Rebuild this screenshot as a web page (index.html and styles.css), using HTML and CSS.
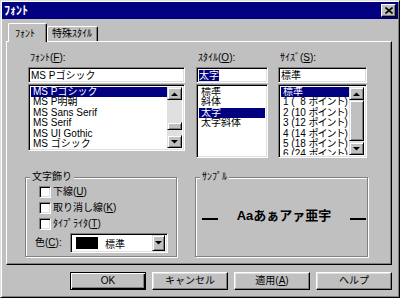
FILE: index.html
```html
<!DOCTYPE html>
<html lang="ja">
<head>
<meta charset="utf-8">
<title>ﾌｫﾝﾄ</title>
<link rel="stylesheet" href="styles.css">
</head>
<body>
<div class="win">
  <div class="title">
    <span class="title-text">ﾌｫﾝﾄ</span>
    <div class="close"><svg width="8" height="7" viewBox="0 0 8 7"><path d="M0.5 0.5L7.5 6.5M7.5 0.5L0.5 6.5" stroke="#000" stroke-width="1.6"/></svg></div>
  </div>
  <div class="tabs">
    <div class="tab active">ﾌｫﾝﾄ</div>
    <div class="tab">特殊ｽﾀｲﾙ</div>
  </div>
  <div class="panel">
    <div class="top">
      <div class="col col-font">
        <div class="lbl">ﾌｫﾝﾄ(<u>F</u>):</div>
        <div class="edit">MS Pゴシック</div>
        <div class="list list-font">
          <div class="items">
            <div class="item sel">MS Pゴシック</div>
            <div class="item">MS P明朝</div>
            <div class="item">MS Sans Serif</div>
            <div class="item">MS Serif</div>
            <div class="item">MS UI Gothic</div>
            <div class="item">MS ゴシック</div>
          </div>
          <div class="sb">
            <div class="sbtn"><svg width="7" height="4" viewBox="0 0 7 4"><path d="M0 4H7L3.5 0.5Z"/></svg></div>
            <div class="track t1"></div>
            <div class="thumb thumb-font"></div>
            <div class="track"></div>
            <div class="sbtn"><svg width="7" height="4" viewBox="0 0 7 4"><path d="M0 0H7L3.5 3.5Z"/></svg></div>
          </div>
        </div>
      </div>
      <div class="col col-style">
        <div class="lbl">ｽﾀｲﾙ(<u>O</u>):</div>
        <div class="edit"><span class="hl">太字</span></div>
        <div class="list list-tall">
          <div class="items">
            <div class="item">標準</div>
            <div class="item">斜体</div>
            <div class="item sel">太字</div>
            <div class="item">太字斜体</div>
          </div>
        </div>
      </div>
      <div class="col col-size">
        <div class="lbl">ｻｲｽﾞ(<u>S</u>):</div>
        <div class="edit">標準</div>
        <div class="list list-tall">
          <div class="items">
            <div class="item sel">標準</div>
            <div class="item">1 (&nbsp; 8 <span class="pt">ポイント</span>)</div>
            <div class="item">2 (10 <span class="pt">ポイント</span>)</div>
            <div class="item">3 (12 <span class="pt">ポイント</span>)</div>
            <div class="item">4 (14 <span class="pt">ポイント</span>)</div>
            <div class="item">5 (18 <span class="pt">ポイント</span>)</div>
            <div class="item">6 (24 <span class="pt">ポイント</span>)</div>
          </div>
          <div class="sb">
            <div class="sbtn"><svg width="7" height="4" viewBox="0 0 7 4"><path d="M0 4H7L3.5 0.5Z"/></svg></div>
            <div class="thumb thumb-size"></div>
            <div class="track"></div>
            <div class="sbtn"><svg width="7" height="4" viewBox="0 0 7 4"><path d="M0 0H7L3.5 3.5Z"/></svg></div>
          </div>
        </div>
      </div>
    </div>
    <div class="bottom">
      <div class="group g-effects">
        <div class="cap">文字飾り</div>
        <div class="checks">
          <div class="chk"><span class="box"></span><span>下線(<u>U</u>)</span></div>
          <div class="chk"><span class="box"></span><span>取り消し線(<u>K</u>)</span></div>
          <div class="chk"><span class="box"></span><span>ﾀｲﾌﾟﾗｲﾀ(<u>T</u>)</span></div>
        </div>
        <div class="color-row">
          <span class="color-lbl">色(<u>C</u>):</span>
          <div class="combo">
            <span class="swatch"></span>
            <span class="combo-text">標準</span>
            <div class="dd"><svg width="7" height="4" viewBox="0 0 7 4"><path d="M0 0H7L3.5 3.5Z"/></svg></div>
          </div>
        </div>
      </div>
      <div class="group g-sample">
        <div class="cap">ｻﾝﾌﾟﾙ</div>
        <div class="sample">
          <span class="dash"></span>
          <span class="sample-text">Aaあぁアァ亜宇</span>
          <span class="dash"></span>
        </div>
      </div>
    </div>
  </div>
  <div class="btns">
    <div class="btn def">OK</div>
    <div class="btn">キャンセル</div>
    <div class="btn">適用(<u>A</u>)</div>
    <div class="btn">ヘルプ</div>
  </div>
</div>
</body>
</html>
```
FILE: styles.css
```css
* { box-sizing: border-box; margin: 0; padding: 0; }
html, body { width: 400px; height: 298px; overflow: hidden; background: #c0c0c0; }
body {
  font-family: "Liberation Sans", "Noto Sans CJK JP", sans-serif;
  font-size: 10px;
  color: #000;
}
u { text-decoration: underline; text-underline-offset: 1px; }

.win {
  width: 400px;
  height: 298px;
  border: 1px solid;
  border-color: #dfdfdf #000 #000 #dfdfdf;
  box-shadow: inset 1px 1px #fff, inset -1px -1px #808080;
  padding: 1px;
  display: flex;
  flex-direction: column;
}

.title {
  height: 17px;
  flex: none;
  background: #000080;
  color: #fff;
  display: flex;
  align-items: center;
  justify-content: space-between;
  padding: 0 2px 0 2px;
}
.title-text { font-weight: bold; font-size: 12px; line-height: 14px; }
.close {
  width: 15px;
  height: 13px;
  background: #c0c0c0;
  border: 1px solid;
  border-color: #fff #000 #000 #fff;
  box-shadow: inset -1px -1px #808080;
  display: flex;
  align-items: center;
  justify-content: center;
}

.tabs {
  display: flex;
  align-items: flex-end;
  height: 18px;
  margin: 4px 0 0 6px;
  flex: none;
}
.tab {
  height: 15px;
  line-height: 13px;
  border: 1px solid;
  border-bottom: none;
  border-color: #fff #000 #000 #fff;
  box-shadow: inset -1px 0 #808080;
  border-radius: 2px 2px 0 0;
  padding: 0 5px 0 4px;
  background: #c0c0c0;
}
.tab.active {
  height: 19px;
  margin-bottom: -1px;
  position: relative;
  z-index: 1;
  width: 39px;
  padding: 3px 0 0 6px;
}

.panel {
  width: 386px;
  height: 224px;
  margin-left: 4px;
  flex: none;
  border: 1px solid;
  border-color: #fff #000 #000 #fff;
  box-shadow: inset -1px -1px #808080;
  padding-top: 10px;
}

.top { display: flex; padding-left: 21px; height: 106px; }
.col-font { width: 157px; }
.col-style { width: 72px; margin-left: 11px; }
.col-size { width: 89px; margin-left: 10px; }
.lbl { line-height: 12px; height: 12px; padding-left: 2px; white-space: nowrap; }

.edit, .list, .combo, .box {
  border: 1px solid;
  border-color: #808080 #fff #fff #808080;
  box-shadow: inset 1px 1px #000, inset -1px -1px #dfdfdf;
  background: #fff;
}
.edit {
  height: 16px;
  margin-top: 3px;
  padding: 2px 2px 0;
  line-height: 12px;
  white-space: nowrap;
}
.hl { background: #000080; color: #fff; }

.list {
  margin-top: 1px;
  height: 67px;
  padding: 2px;
  display: flex;
}
.list-tall { height: 74px; }
.items { flex: 1; overflow: hidden; }
.item {
  height: 10.4px;
  line-height: 10.4px;
  padding-left: 2px;
  white-space: nowrap;
}
.item.sel { background: #000080; color: #fff; }
.pt { letter-spacing: -1px; }

.sb {
  width: 15px;
  flex: none;
  background: #e0e0e0;
  display: flex;
  flex-direction: column;
}
.sbtn, .thumb, .dd, .btn {
  background: #c0c0c0;
  border: 1px solid;
  border-color: #dfdfdf #000 #000 #dfdfdf;
  box-shadow: inset 1px 1px #fff, inset -1px -1px #808080;
}
.sbtn {
  height: 13px;
  flex: none;
  display: flex;
  align-items: center;
  justify-content: center;
}
.track { flex: 1; }
.track.t1 { flex: none; height: 22px; }
.thumb-font { height: 8px; flex: none; }
.thumb-size { height: 41px; flex: none; }

.bottom { display: flex; padding-left: 18px; margin-top: 19px; }
.group {
  height: 80px;
  border: 1px solid #808080;
  box-shadow: inset 1px 1px #fff, 1px 1px #fff;
}
.g-effects { width: 152px; }
.g-sample { width: 173px; margin-left: 18px; }
.cap {
  display: table;
  margin: -7px 0 0 4px;
  padding: 0 2px;
  line-height: 12px;
  background: #c0c0c0;
}

.checks { margin-top: 3px; padding-left: 13px; display: flex; flex-direction: column; gap: 4px; }
.chk { display: flex; align-items: center; gap: 2px; height: 12px; line-height: 12px; }
.box { width: 12px; height: 12px; flex: none; }

.color-row { display: flex; align-items: center; margin-top: 3px; padding-left: 9px; }
.color-lbl { width: 35px; line-height: 12px; }
.combo {
  width: 98px;
  height: 20px;
  display: flex;
  align-items: center;
  padding: 2px;
}
.swatch { width: 22px; height: 12px; background: #000; margin-left: 3px; }
.combo-text { margin-left: 7px; }
.dd {
  margin-left: auto;
  width: 13px;
  height: 16px;
  display: flex;
  align-items: center;
  justify-content: center;
}

.sample {
  display: flex;
  align-items: baseline;
  justify-content: space-between;
  margin-top: 25px;
  padding: 0 1px 0 6px;
}
.sample-text { font-size: 13px; font-weight: bold; line-height: 16px; }
.dash { display: inline-block; width: 16px; height: 2px; background: #000; }

.btns {
  display: flex;
  justify-content: flex-end;
  gap: 6px;
  margin-top: 7px;
  padding-right: 6px;
}
.btn {
  width: 76px;
  height: 18px;
  display: flex;
  align-items: center;
  justify-content: center;
  border-color: #fff #000 #000 #fff;
  box-shadow: inset -1px -1px #808080, inset 1px 1px #dfdfdf;
  line-height: 12px;
}
.btn.def {
  border: 1px solid #000;
  box-shadow: inset 1px 1px #fff, inset -1px -1px #000, inset -2px -2px #808080;
}
```
